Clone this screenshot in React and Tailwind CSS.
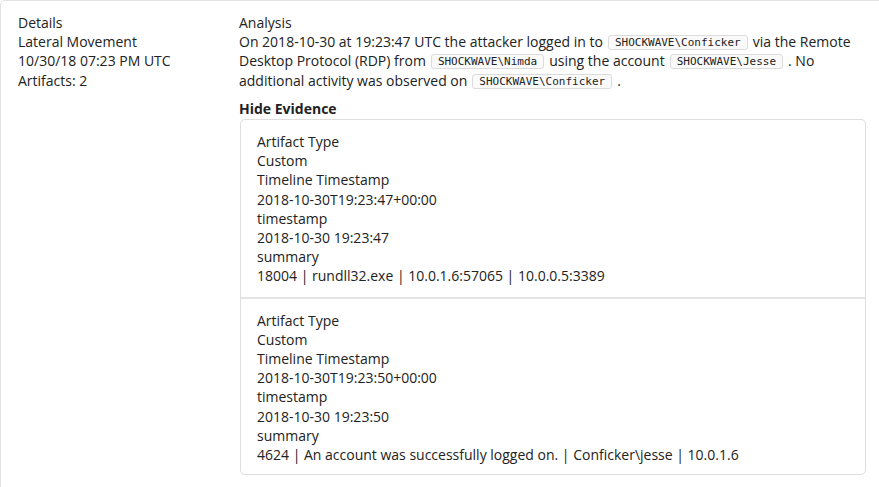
export default function App() {
  const Code = ({ children }) => (
    <code className="mx-[5px] inline-block rounded-[3px] border border-[#dcdcdc] bg-[#fafafa] px-[6px] align-[1px] text-[11px] leading-[13px] text-[#222] [font-family:'DejaVu_Sans_Mono',monospace]">
      {children}
    </code>
  );
  const items = [
    ["Artifact Type", "Custom", "Timeline Timestamp", "2018-10-30T19:23:47+00:00", "timestamp", "2018-10-30 19:23:47", "summary", "18004 | rundll32.exe | 10.0.1.6:57065 | 10.0.0.5:3389"],
    ["Artifact Type", "Custom", "Timeline Timestamp", "2018-10-30T19:23:50+00:00", "timestamp", "2018-10-30 19:23:50", "summary", "4624 | An account was successfully logged on. | Conficker\\jesse | 10.0.1.6"],
  ];
  return (
    <div className="min-h-[487px] bg-white text-[14px] leading-[19.2px] text-[#222] [font-family:'Open_Sans',sans-serif]">
      <div className="flex min-h-[487px] rounded-tl-[5px] border-l border-t border-[#e3e3e3] pl-[17px] pr-[13px] pt-[12px]">
        <div className="w-[221px] shrink-0">
          <div>Details</div>
          <div>Lateral Movement</div>
          <div>10/30/18 07:23 PM UTC</div>
          <div>Artifacts: 2</div>
        </div>
        <div className="flex-1">
          <div>Analysis</div>
          <p>
            <span>On 2018-10-30 at 19:23:47 UTC the attacker logged in to</span>
            <Code>SHOCKWAVE\Conficker</Code>
            <span>via the Remote Desktop Protocol (RDP) from</span>
            <Code>SHOCKWAVE\Nimda</Code>
            <span>using the account</span>
            <Code>SHOCKWAVE\Jesse</Code>
            <span>. No additional activity was observed on</span>
            <Code>SHOCKWAVE\Conficker</Code>
            <span>.</span>
          </p>
          <div className="mt-[9px] font-bold">Hide Evidence</div>
          <div className="ml-px mt-[1px] rounded-[5px] border border-[#dedede]">
            {items.map((it, i) => (
              <div key={i} className={`px-[16px] pt-[12px] ${i > 0 ? "border-t-2 border-[#e4e4e4] pb-[10px]" : "pb-[11px]"}`}>
                {it.map((t, j) => (
                  <div key={j}>{t}</div>
                ))}
              </div>
            ))}
          </div>
        </div>
      </div>
    </div>
  );
}
